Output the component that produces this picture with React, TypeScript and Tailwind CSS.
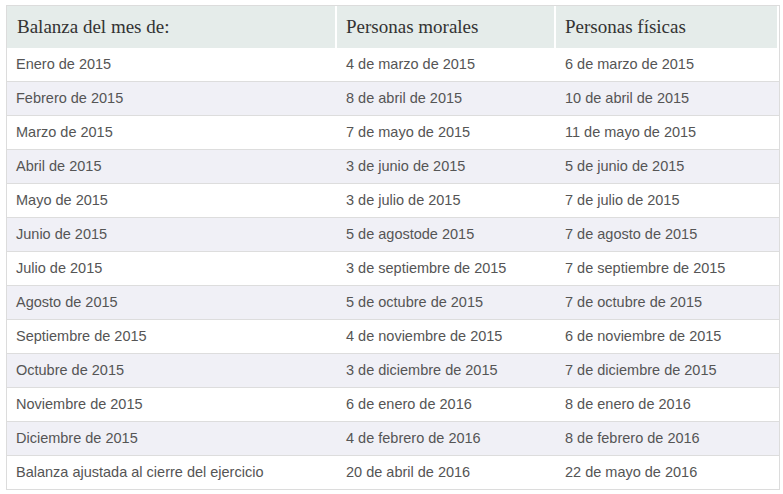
import React from "react";

const rows: [string, string, string][] = [
  ["Enero de 2015", "4 de marzo de 2015", "6 de marzo de 2015"],
  ["Febrero de 2015", "8 de abril de 2015", "10 de abril de 2015"],
  ["Marzo de 2015", "7 de mayo de 2015", "11 de mayo de 2015"],
  ["Abril de 2015", "3 de junio de 2015", "5 de junio de 2015"],
  ["Mayo de 2015", "3 de julio de 2015", "7 de julio de 2015"],
  ["Junio de 2015", "5 de agostode 2015", "7 de agosto de 2015"],
  ["Julio de 2015", "3 de septiembre de 2015", "7 de septiembre de 2015"],
  ["Agosto de 2015", "5 de octubre de 2015", "7 de octubre de 2015"],
  ["Septiembre de 2015", "4 de noviembre de 2015", "6 de noviembre de 2015"],
  ["Octubre de 2015", "3 de diciembre de 2015", "7 de diciembre de 2015"],
  ["Noviembre de 2015", "6 de enero de 2016", "8 de enero de 2016"],
  ["Diciembre de 2015", "4 de febrero de 2016", "8 de febrero de 2016"],
  ["Balanza ajustada al cierre del ejercicio", "20 de abril de 2016", "22 de mayo de 2016"],
];

export default function App() {
  return (
    <div className="w-[783px] h-[494px] bg-white pl-[6px] pt-[5px]">
      <div className="w-[774px] border border-[#dcdcdc]">
        <div className="flex h-[42px] text-[19px] text-[#333] font-['Liberation_Serif',serif]">
          <div className="w-[330px] flex items-center pl-[10px] bg-[#e5ecea] border-r-2 border-white">Balanza del mes de:</div>
          <div className="w-[219px] flex items-center pl-[9px] bg-[#e5ecea] border-r-2 border-white">Personas morales</div>
          <div className="flex-1 flex items-center pl-[9px] bg-[#e5ecea] border-r-2 border-white">Personas físicas</div>
        </div>
        {rows.map((r, i) => (
          <div
            key={i}
            className={`flex text-[14.5px] text-[#555] font-['Liberation_Sans',Arial,sans-serif] pt-px ${i === 0 ? "h-[33px]" : "h-[34px] border-t border-[#dddddd]"} ${i % 2 === 1 ? "bg-[#f0f0f6]" : "bg-white"}`}
          >
            <div className="w-[330px] flex items-center pl-[9px]">{r[0]}</div>
            <div className="w-[219px] flex items-center pl-[9px]">{r[1]}</div>
            <div className="flex-1 flex items-center pl-[9px]">{r[2]}</div>
          </div>
        ))}
      </div>
    </div>
  );
}
